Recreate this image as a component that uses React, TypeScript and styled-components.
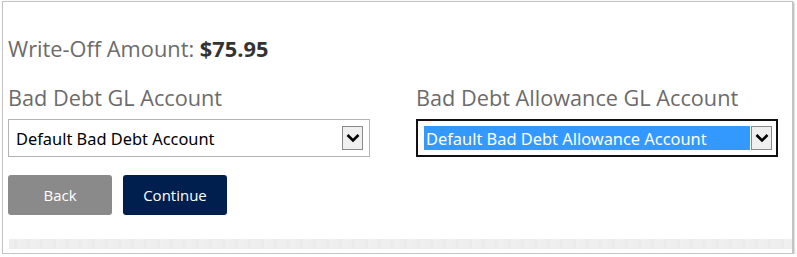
import React from 'react';
import styled, { createGlobalStyle } from 'styled-components';

const Global = createGlobalStyle`
  html, body {
    margin: 0;
    padding: 0;
    background: #ffffff;
  }
  body {
    font-family: "Open Sans", "Liberation Sans", sans-serif;
  }
`;

const Frame = styled.div`
  box-sizing: border-box;
  margin: 1px 0 0 2px;
  width: 791px;
  height: 253px;
  border: 1px solid #c4c4c4;
  box-shadow: 1px 1px 2px rgba(0, 0, 0, 0.35);
  background: #fff;
  padding: 0 0 0 4px;
  display: flex;
  flex-direction: column;
`;

const Content = styled.div`
  width: 770px;
  padding-left: 1px;
  flex: 1;
`;

const Amount = styled.div`
  margin-top: 32px;
  font-size: 21.8px;
  line-height: 30px;
  color: #6b6b6b;

  strong {
    color: #333;
    font-weight: 700;
  }
`;

const Fields = styled.div`
  display: grid;
  grid-template-columns: 362px 362px;
  column-gap: 46px;
  margin-top: 19px;
`;

const Field = styled.div`
  display: flex;
  flex-direction: column;
`;

const Label = styled.div`
  font-size: 21.7px;
  line-height: 30px;
  color: #6b6b6b;
  margin-bottom: 6px;
`;

const SelectBox = styled.div<{ $focused?: boolean }>`
  box-sizing: border-box;
  height: 38px;
  border: ${(p) => (p.$focused ? '2px solid #111' : '1px solid #b3b3b3')};
  display: flex;
  align-items: center;
  padding: ${(p) => (p.$focused ? '0 4px 0 6px' : '0 6px 0 5px')};
  background: #fff;
`;

const Value = styled.div<{ $selected?: boolean }>`
  flex: 1;
  height: 24px;
  display: flex;
  align-items: center;
  padding-left: 2px;
  font-family: "Noto Sans", "Open Sans", sans-serif;
  font-size: 16.4px;
  color: ${(p) => (p.$selected ? '#fff' : '#000')};
  background: ${(p) => (p.$selected ? '#3399ff' : 'transparent')};
  white-space: nowrap;
`;

const Arrow = styled.div`
  box-sizing: border-box;
  width: 21px;
  height: 24px;
  border: 1px solid #8a8a8a;
  background: #efefef;
  display: flex;
  align-items: center;
  justify-content: center;
  margin-left: 1px;
`;

const Actions = styled.div`
  display: flex;
  gap: 11px;
  margin-top: 18px;
`;

const Button = styled.button<{ $primary?: boolean }>`
  width: 104px;
  height: 40px;
  border: none;
  border-radius: 3px;
  font-family: "Open Sans", sans-serif;
  font-size: 15px;
  color: #fff;
  background: ${(p) => (p.$primary ? '#001f4e' : '#8a8a8a')};
  cursor: pointer;
`;

const Strip = styled.div`
  margin: 0 0 4px 2px;
  width: 783px;
  height: 10px;
  background: repeating-linear-gradient(90deg, #eeeeee 0 5px, #ebebeb 5px 8px, #efefef 8px 13px);
`;

const Chevron = () => (
  <svg width="14" height="10" viewBox="0 0 14 10">
    <path d="M1.5 2 L7 7.5 L12.5 2" fill="none" stroke="#000" strokeWidth="2.6" />
  </svg>
);

export default function App() {
  return (
    <>
      <Global />
      <Frame>
        <Content>
          <Amount>
            Write-Off Amount: <strong>$75.95</strong>
          </Amount>
          <Fields>
            <Field>
              <Label>Bad Debt GL Account</Label>
              <SelectBox>
                <Value>Default Bad Debt Account</Value>
                <Arrow>
                  <Chevron />
                </Arrow>
              </SelectBox>
            </Field>
            <Field>
              <Label>Bad Debt Allowance GL Account</Label>
              <SelectBox $focused>
                <Value $selected>Default Bad Debt Allowance Account</Value>
                <Arrow>
                  <Chevron />
                </Arrow>
              </SelectBox>
            </Field>
          </Fields>
          <Actions>
            <Button>Back</Button>
            <Button $primary>Continue</Button>
          </Actions>
        </Content>
        <Strip />
      </Frame>
    </>
  );
}
